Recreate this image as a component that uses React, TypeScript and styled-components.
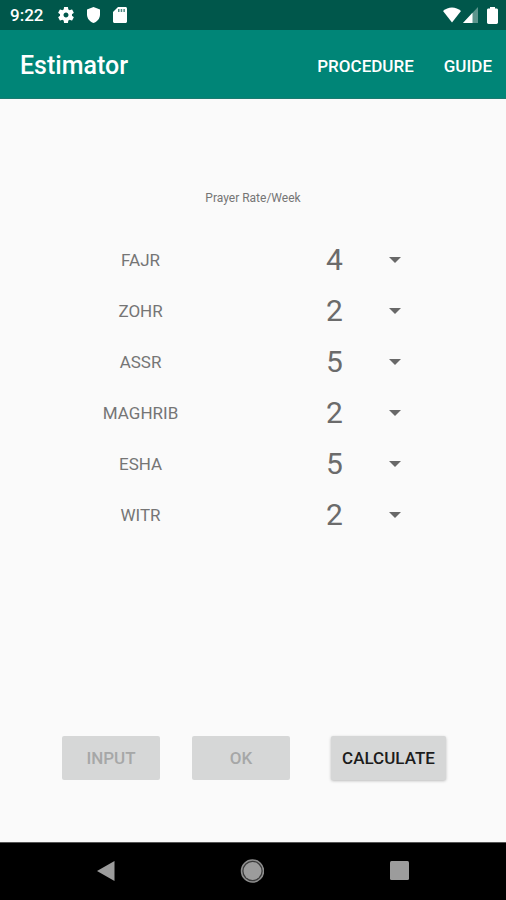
import React, { useState } from "react";
import styled, { createGlobalStyle } from "styled-components";

const GlobalStyle = createGlobalStyle`
  *, *::before, *::after { box-sizing: border-box; }
  body { margin: 0; background: #fafafa; }
  body, button, select { font-family: Roboto, "Liberation Sans", sans-serif; }
`;

const Screen = styled.div`
  display: flex;
  flex-direction: column;
  min-height: 100vh;
  background: #fafafa;
`;

const StatusBar = styled.div`
  display: flex;
  align-items: center;
  justify-content: space-between;
  height: 30px;
  padding: 0 8px 0 10px;
  background: #00574b;
  color: #fff;
`;

const Clock = styled.time`
  width: 48px;
  font-size: 17px;
  line-height: 20px;
  font-weight: 500;
`;

const StatusGroup = styled.div<{ $gap: number }>`
  display: flex;
  align-items: center;
  gap: ${(p) => p.$gap}px;

  svg { display: block; }
`;

const AppBar = styled.header`
  display: flex;
  align-items: center;
  justify-content: space-between;
  height: 69px;
  padding: 3px 14px 0 20px;
  background: #008577;
  border-bottom: 1px solid #1b7a70;
  color: #fff;
`;

const Title = styled.h1`
  margin: 0;
  font-size: 25px;
  line-height: 30px;
  font-weight: 500;
`;

const Menu = styled.nav`
  display: flex;
  gap: 30px;
`;

const MenuButton = styled.button`
  padding: 0;
  border: 0;
  background: none;
  color: #fff;
  font-size: 17px;
  line-height: 20px;
  font-weight: 500;
  cursor: pointer;
`;

const Main = styled.main`
  display: flex;
  flex: 1;
  flex-direction: column;
  padding: 91px 0 62px;
`;

const Heading = styled.h2`
  margin: 0 0 28px;
  color: #757575;
  font-size: 12px;
  line-height: 16px;
  font-weight: 400;
  text-align: center;
`;

const Row = styled.div`
  display: grid;
  grid-template-columns: 5fr 4fr;
  align-items: center;
  height: 51px;
`;

const Label = styled.label`
  color: #757575;
  font-size: 17px;
  line-height: 20px;
  text-align: center;
`;

const Spinner = styled.div`
  display: grid;
  align-items: center;
  width: 126px;
  margin-left: 45px;
`;

const Select = styled.select`
  grid-area: 1 / 1;
  width: 100%;
  height: 40px;
  padding: 0;
  border: 0;
  background: transparent;
  color: #6b6b6b;
  font-size: 30px;
  line-height: 40px;
  appearance: none;
  cursor: pointer;
`;

const Arrow = styled.svg`
  grid-area: 1 / 1;
  justify-self: end;
  margin-right: 51px;
  pointer-events: none;
`;

const Actions = styled.div`
  display: flex;
  align-items: center;
  justify-content: space-between;
  margin-top: auto;
  padding: 0 60px 0 62px;
`;

const ActionPair = styled.div`
  display: flex;
  gap: 32px;
`;

const ActionButton = styled.button<{ $width: number }>`
  width: ${(p) => p.$width}px;
  height: 44px;
  padding: 0;
  border: 0;
  border-radius: 2px;
  background: #d6d7d7;
  color: #1c1c1c;
  font-size: 17px;
  line-height: 20px;
  font-weight: 500;
  box-shadow: 0 1px 3px rgba(0, 0, 0, 0.25);
  cursor: pointer;

  &:disabled {
    color: #a6a7a7;
    box-shadow: none;
    cursor: default;
  }
`;

const NavBar = styled.nav`
  display: flex;
  align-items: center;
  justify-content: space-between;
  height: 58px;
  padding: 0 94px 2px 92px;
  border-top: 1px solid #555;
  background: #000;
`;

const NavButton = styled.button`
  display: flex;
  padding: 0;
  border: 0;
  background: none;
  cursor: pointer;
`;

const prayers = [
  { name: "FAJR", rate: 4 },
  { name: "ZOHR", rate: 2 },
  { name: "ASSR", rate: 5 },
  { name: "MAGHRIB", rate: 2 },
  { name: "ESHA", rate: 5 },
  { name: "WITR", rate: 2 },
];

const rates = [0, 1, 2, 3, 4, 5, 6, 7];

function RateRow({ name, rate }: { name: string; rate: number }) {
  const [value, setValue] = useState(rate);
  const id = `rate-${name.toLowerCase()}`;
  return (
    <Row>
      <Label htmlFor={id}>{name}</Label>
      <Spinner>
        <Select id={id} value={value} onChange={(e) => setValue(Number(e.target.value))}>
          {rates.map((r) => (
            <option key={r} value={r}>{r}</option>
          ))}
        </Select>
        <Arrow width="12" height="6" viewBox="0 0 12 6" aria-hidden="true">
          <path d="M0 0h12L6 6z" fill="#686868" />
        </Arrow>
      </Spinner>
    </Row>
  );
}

function StatusIcons() {
  return (
    <StatusGroup $gap={13}>
      <svg width="16" height="16" viewBox="2 2 20 20" fill="#fff" aria-hidden="true">
        <path d="M19.43 12.98c.04-.32.07-.64.07-.98s-.03-.66-.07-.98l2.11-1.65c.19-.15.24-.42.12-.64l-2-3.46c-.12-.22-.39-.3-.61-.22l-2.49 1c-.52-.4-1.08-.73-1.69-.98l-.38-2.65C14.46 2.18 14.25 2 14 2h-4c-.25 0-.46.18-.49.42l-.38 2.65c-.61.25-1.17.59-1.69.98l-2.49-1c-.23-.09-.49 0-.61.22l-2 3.46c-.13.22-.07.49.12.64l2.11 1.65c-.04.32-.07.65-.07.98s.03.66.07.98l-2.11 1.65c-.19.15-.24.42-.12.64l2 3.46c.12.22.39.3.61.22l2.49-1c.52.4 1.08.73 1.69.98l.38 2.65c.03.24.24.42.49.42h4c.25 0 .46-.18.49-.42l.38-2.65c.61-.25 1.17-.59 1.69-.98l2.49 1c.23.09.49 0 .61-.22l2-3.46c.12-.22.07-.49-.12-.64l-2.11-1.65zM12 15.1c-1.7 0-3.1-1.4-3.1-3.1s1.4-3.1 3.1-3.1 3.1 1.4 3.1 3.1-1.4 3.1-3.1 3.1z" />
      </svg>
      <svg width="13" height="16" viewBox="0 0 13 16" fill="#fff" aria-hidden="true">
        <path d="M6.500 0L13 2.500V7.500C13 11.500 10.200 14.800 6.500 16 2.800 14.800 0 11.500 0 7.500V2.500z" />
      </svg>
      <svg width="14" height="16" viewBox="0 0 14 16" aria-hidden="true">
        <path d="M5 0h7.500c.8 0 1.500.7 1.500 1.500v13c0 .8-.7 1.500-1.500 1.500h-11C.7 16 0 15.300 0 14.500V5z" fill="#fff" />
        <path d="M5 2h1.500v3H5zM7.700 2h1.500v3H7.700zM10.400 2h1.500v3h-1.500z" fill="#00574b" opacity=".7" />
      </svg>
    </StatusGroup>
  );
}

function SystemIcons() {
  return (
    <StatusGroup $gap={2}>
      <svg width="18" height="16" viewBox="0 0 18 16" fill="#fff" aria-hidden="true">
        <path d="M0 4C5-.7 13-.7 18 4L9 15.500z" />
      </svg>
      <svg width="15" height="16" viewBox="0 0 15 16" aria-hidden="true">
        <path d="M15 0v16H0z" fill="#5d958d" />
        <path d="M9.500 5.800V16H0z" fill="#fff" />
      </svg>
      <svg width="18" height="17" viewBox="0 0 18 17" fill="#fff" aria-hidden="true">
        <path d="M10 0h5v1.500h1.500c.8 0 1.500.6 1.500 1.400v12.700c0 .8-.7 1.400-1.500 1.400h-8C7.700 17 7 16.400 7 15.600V2.900C7 2.100 7.700 1.500 8.500 1.500H10z" />
      </svg>
    </StatusGroup>
  );
}

export default function App() {
  return (
    <Screen>
      <GlobalStyle />
      <StatusBar>
        <StatusGroup $gap={0}>
          <Clock>9:22</Clock>
          <StatusIcons />
        </StatusGroup>
        <SystemIcons />
      </StatusBar>
      <AppBar>
        <Title>Estimator</Title>
        <Menu>
          <MenuButton type="button">PROCEDURE</MenuButton>
          <MenuButton type="button">GUIDE</MenuButton>
        </Menu>
      </AppBar>
      <Main>
        <Heading>Prayer Rate/Week</Heading>
        {prayers.map((p) => (
          <RateRow key={p.name} name={p.name} rate={p.rate} />
        ))}
        <Actions>
          <ActionPair>
            <ActionButton type="button" $width={98} disabled>INPUT</ActionButton>
            <ActionButton type="button" $width={98} disabled>OK</ActionButton>
          </ActionPair>
          <ActionButton type="button" $width={115}>CALCULATE</ActionButton>
        </Actions>
      </Main>
      <NavBar aria-label="System">
        <NavButton type="button" aria-label="Back">
          <svg width="24" height="24" viewBox="0 0 24 24">
            <path d="M22.500 2v20L5 12z" fill="#9c9c9c" />
          </svg>
        </NavButton>
        <NavButton type="button" aria-label="Home">
          <svg width="24" height="24" viewBox="0 0 24 24">
            <circle cx="12.500" cy="12" r="11" fill="#3a3a3a" stroke="#8e8e8e" strokeWidth="1.500" />
            <circle cx="12.500" cy="12" r="9" fill="#9c9c9c" />
          </svg>
        </NavButton>
        <NavButton type="button" aria-label="Recent apps">
          <svg width="24" height="24" viewBox="0 0 24 24">
            <rect x="2" y="2" width="19" height="19" rx="1.500" fill="#9c9c9c" />
          </svg>
        </NavButton>
      </NavBar>
    </Screen>
  );
}
